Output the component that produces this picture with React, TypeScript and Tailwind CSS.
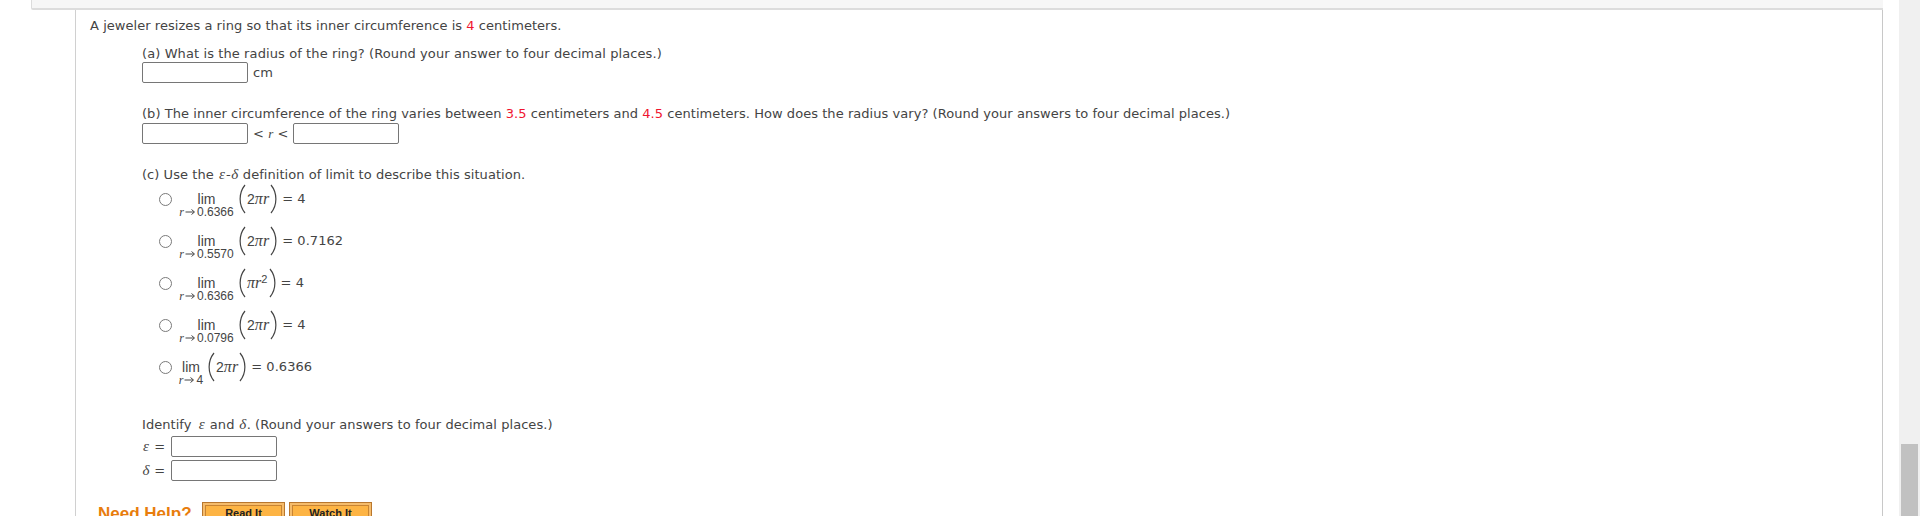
import React from "react";

const Red = ({ children }: { children: React.ReactNode }) => <span className="text-[#f0142f]">{children}</span>;
const Box = () => <div className="h-[21px] w-[106px] shrink-0 rounded-[2px] border border-[#767676] bg-white" />;
const Serif = ({ children }: { children: React.ReactNode }) => (
  <i className="[font-family:'Liberation_Serif',serif]">{children}</i>
);
const Pi = ({ children }: { children: React.ReactNode }) => (
  <i className="text-[16px] [font-family:'Liberation_Serif',serif]">{children}</i>
);
const Greek = ({ children }: { children: React.ReactNode }) => (
  <i className="inline-block w-[8px] text-center text-[15px] leading-[0] [font-family:'Liberation_Serif',serif]">{children}</i>
);
const Paren = ({ right = false }: { right?: boolean }) => (
  <svg width="9" height="30" viewBox="0 0 9 30" className="shrink-0">
    <path d={right ? "M2 1 C8.5 9 8.5 21 2 29" : "M7 1 C0.5 9 0.5 21 7 29"} fill="none" stroke="#444" strokeWidth="1.2" />
  </svg>
);
const Arrow = () => (
  <svg width="11" height="8" viewBox="0 0 11 8" className="mx-[1px] shrink-0">
    <path d="M0.5 4H9M6.5 1.5L9.5 4L6.5 6.5" fill="none" stroke="#444" strokeWidth="1" />
  </svg>
);

function Option({ sub, expr, value, wide = true }: { sub: string; expr: React.ReactNode; value: string; wide?: boolean }) {
  return (
    <div className="flex h-[42px] items-start">
      <div className="mt-[10px] h-[13px] w-[13px] shrink-0 rounded-full border-[1.5px] border-[#7a7a7a] bg-white" />
      <div className={`flex flex-col items-center ${wide ? "ml-[6px] w-[57px]" : "ml-[6px] w-[26px]"} tracking-normal [font-family:'Liberation_Sans',sans-serif]`}>
        <span className="mt-[10px] text-[14px] leading-[13px]">lim</span>
        <span className="flex items-center whitespace-nowrap text-[12px] leading-[12px]">
          <Serif>r</Serif>
          <Arrow />
          {sub}
        </span>
      </div>
      <div className="ml-[3px] mt-[1px] flex h-[30px] items-center">
        <Paren />
        <span className="whitespace-nowrap leading-[16px] [font-family:'Liberation_Sans',sans-serif] text-[14px]">{expr}</span>
        <Paren right />
        <span className="ml-[4px]">= {value}</span>
      </div>
    </div>
  );
}

export default function App() {
  return (
    <div className="flex h-[516px] w-full overflow-hidden bg-white text-[13px] leading-[16px] tracking-[0.05px] text-[#444] [font-family:'DejaVu_Sans',Verdana,sans-serif]">
      <main className="min-w-0 flex-1 pl-[31px] pr-[16px]">
        <div className="h-[10px] rounded-bl-[2px] border-b-2 border-l border-[#dcdcdc] bg-[#f6f6f6]" />
        <div className="ml-[44px] h-[506px] overflow-hidden border-x border-l-[#d0d0d0] border-r-[#c8c8c8] pl-[14px] pt-[8px]">
          <p>
            A jeweler resizes a ring so that its inner circumference is <Red>4</Red> centimeters.
          </p>
          <div className="ml-[52px] mt-[12px]">
            <p className="tracking-[0.1px]">(a) What is the radius of the ring? (Round your answer to four decimal places.)</p>
            <div className="flex items-center">
              <Box />
              <span className="ml-[5px]">cm</span>
            </div>

            <p className="mt-[23px]">
              (b) The inner circumference of the ring varies between <Red>3.5</Red> centimeters and <Red>4.5</Red> centimeters. How does the radius vary? (Round your answers to four decimal places.)
            </p>
            <div className="mt-[1px] flex items-center">
              <Box />
              <span className="mx-[5px] w-[35px] whitespace-pre text-center">
                {"< "}<Serif>r</Serif>{" <"}
              </span>
              <Box />
            </div>

            <p className="mt-[23px]">(c) Use the <Greek>ε</Greek>-<Greek>δ</Greek> definition of limit to describe this situation.</p>
            <div className="ml-[17px]">
              <Option sub="0.6366" expr={<>2<Pi>πr</Pi></>} value="4" />
              <Option sub="0.5570" expr={<>2<Pi>πr</Pi></>} value="0.7162" />
              <Option sub="0.6366" expr={<><Pi>πr</Pi><sup className="text-[11px]">2</sup></>} value="4" />
              <Option sub="0.0796" expr={<>2<Pi>πr</Pi></>} value="4" />
              <Option sub="4" expr={<>2<Pi>πr</Pi></>} value="0.6366" wide={false} />
            </div>

            <p className="mt-[24px]"><span className="mr-[2px]">Identify</span> <Greek>ε</Greek> and <Greek>δ</Greek>. (Round your answers to four decimal places.)</p>
            <div className="mt-[3px] flex items-center">
              <span className="w-[29px]"><Greek>ε</Greek> =</span>
              <Box />
            </div>
            <div className="mt-[3px] flex items-center">
              <span className="w-[29px]"><Greek>δ</Greek> =</span>
              <Box />
            </div>
          </div>

          <div className="ml-[8px] mt-[21px] flex items-start tracking-normal [font-family:'Liberation_Sans',sans-serif]">
            <span className="mt-[2px] w-[104px] text-[17px] font-bold leading-[20px] text-[#e87d0d]">Need Help?</span>
            {["Read It", "Watch It"].map((t) => (
              <div key={t} className="mr-[4px] w-[83px] border border-[#b9772e] bg-[#f5bc6c] p-[2px]">
                <div className="h-[24px] border border-[#c98432] bg-[#fdb444] pt-[1px] text-center text-[11px] font-bold leading-[13px] text-[#222]">
                  {t}
                </div>
              </div>
            ))}
          </div>
        </div>
      </main>
      <aside className="flex h-full w-[21px] shrink-0 flex-col bg-[#f0f0f0] px-[2px] pt-[444px]">
        <div className="h-full bg-[#c1c1c1]" />
      </aside>
    </div>
  );
}
